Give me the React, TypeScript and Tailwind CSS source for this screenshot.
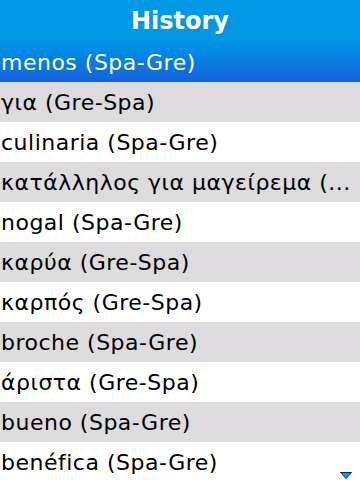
import React from "react";

const rows = [
  "για (Gre-Spa)",
  "culinaria (Spa-Gre)",
  "κατάλληλος για μαγείρεμα (...",
  "nogal (Spa-Gre)",
  "καρύα (Gre-Spa)",
  "καρπός (Gre-Spa)",
  "broche (Spa-Gre)",
  "άριστα (Gre-Spa)",
  "bueno (Spa-Gre)",
  "benéfica (Spa-Gre)",
];

export default function App() {
  return (
    <div
      className="relative w-[360px] h-[480px] overflow-hidden bg-white"
      style={{ fontFamily: '"DejaVu Sans", sans-serif' }}
    >
      <div className="h-[42px] bg-[#0098e4] flex items-center justify-center">
        <span className="text-white font-bold text-[24px] leading-none">History</span>
      </div>
      <div className="h-[40px] bg-gradient-to-b from-[#0096e6] to-[#1462dc] flex items-center pl-[1px]">
        <span className="text-white text-[22px] tracking-[0.5px] whitespace-nowrap">menos (Spa-Gre)</span>
      </div>
      {rows.map((r, i) => (
        <div
          key={i}
          className={
            "h-[40px] flex items-center pl-[1px] " +
            (i % 2 === 0 ? "bg-[#dddbde]" : "bg-white")
          }
        >
          <span className="text-black text-[22px] tracking-[0.5px] whitespace-nowrap">{r}</span>
        </div>
      ))}
      <svg
        className="absolute left-[340px] top-[472px]"
        width="12"
        height="7"
        viewBox="0 0 12 7"
      >
        <polygon points="0.5,0.5 11.5,0.5 6,6.5" fill="#1e8ff0" stroke="#0a2a55" strokeWidth="1" />
      </svg>
    </div>
  );
}
